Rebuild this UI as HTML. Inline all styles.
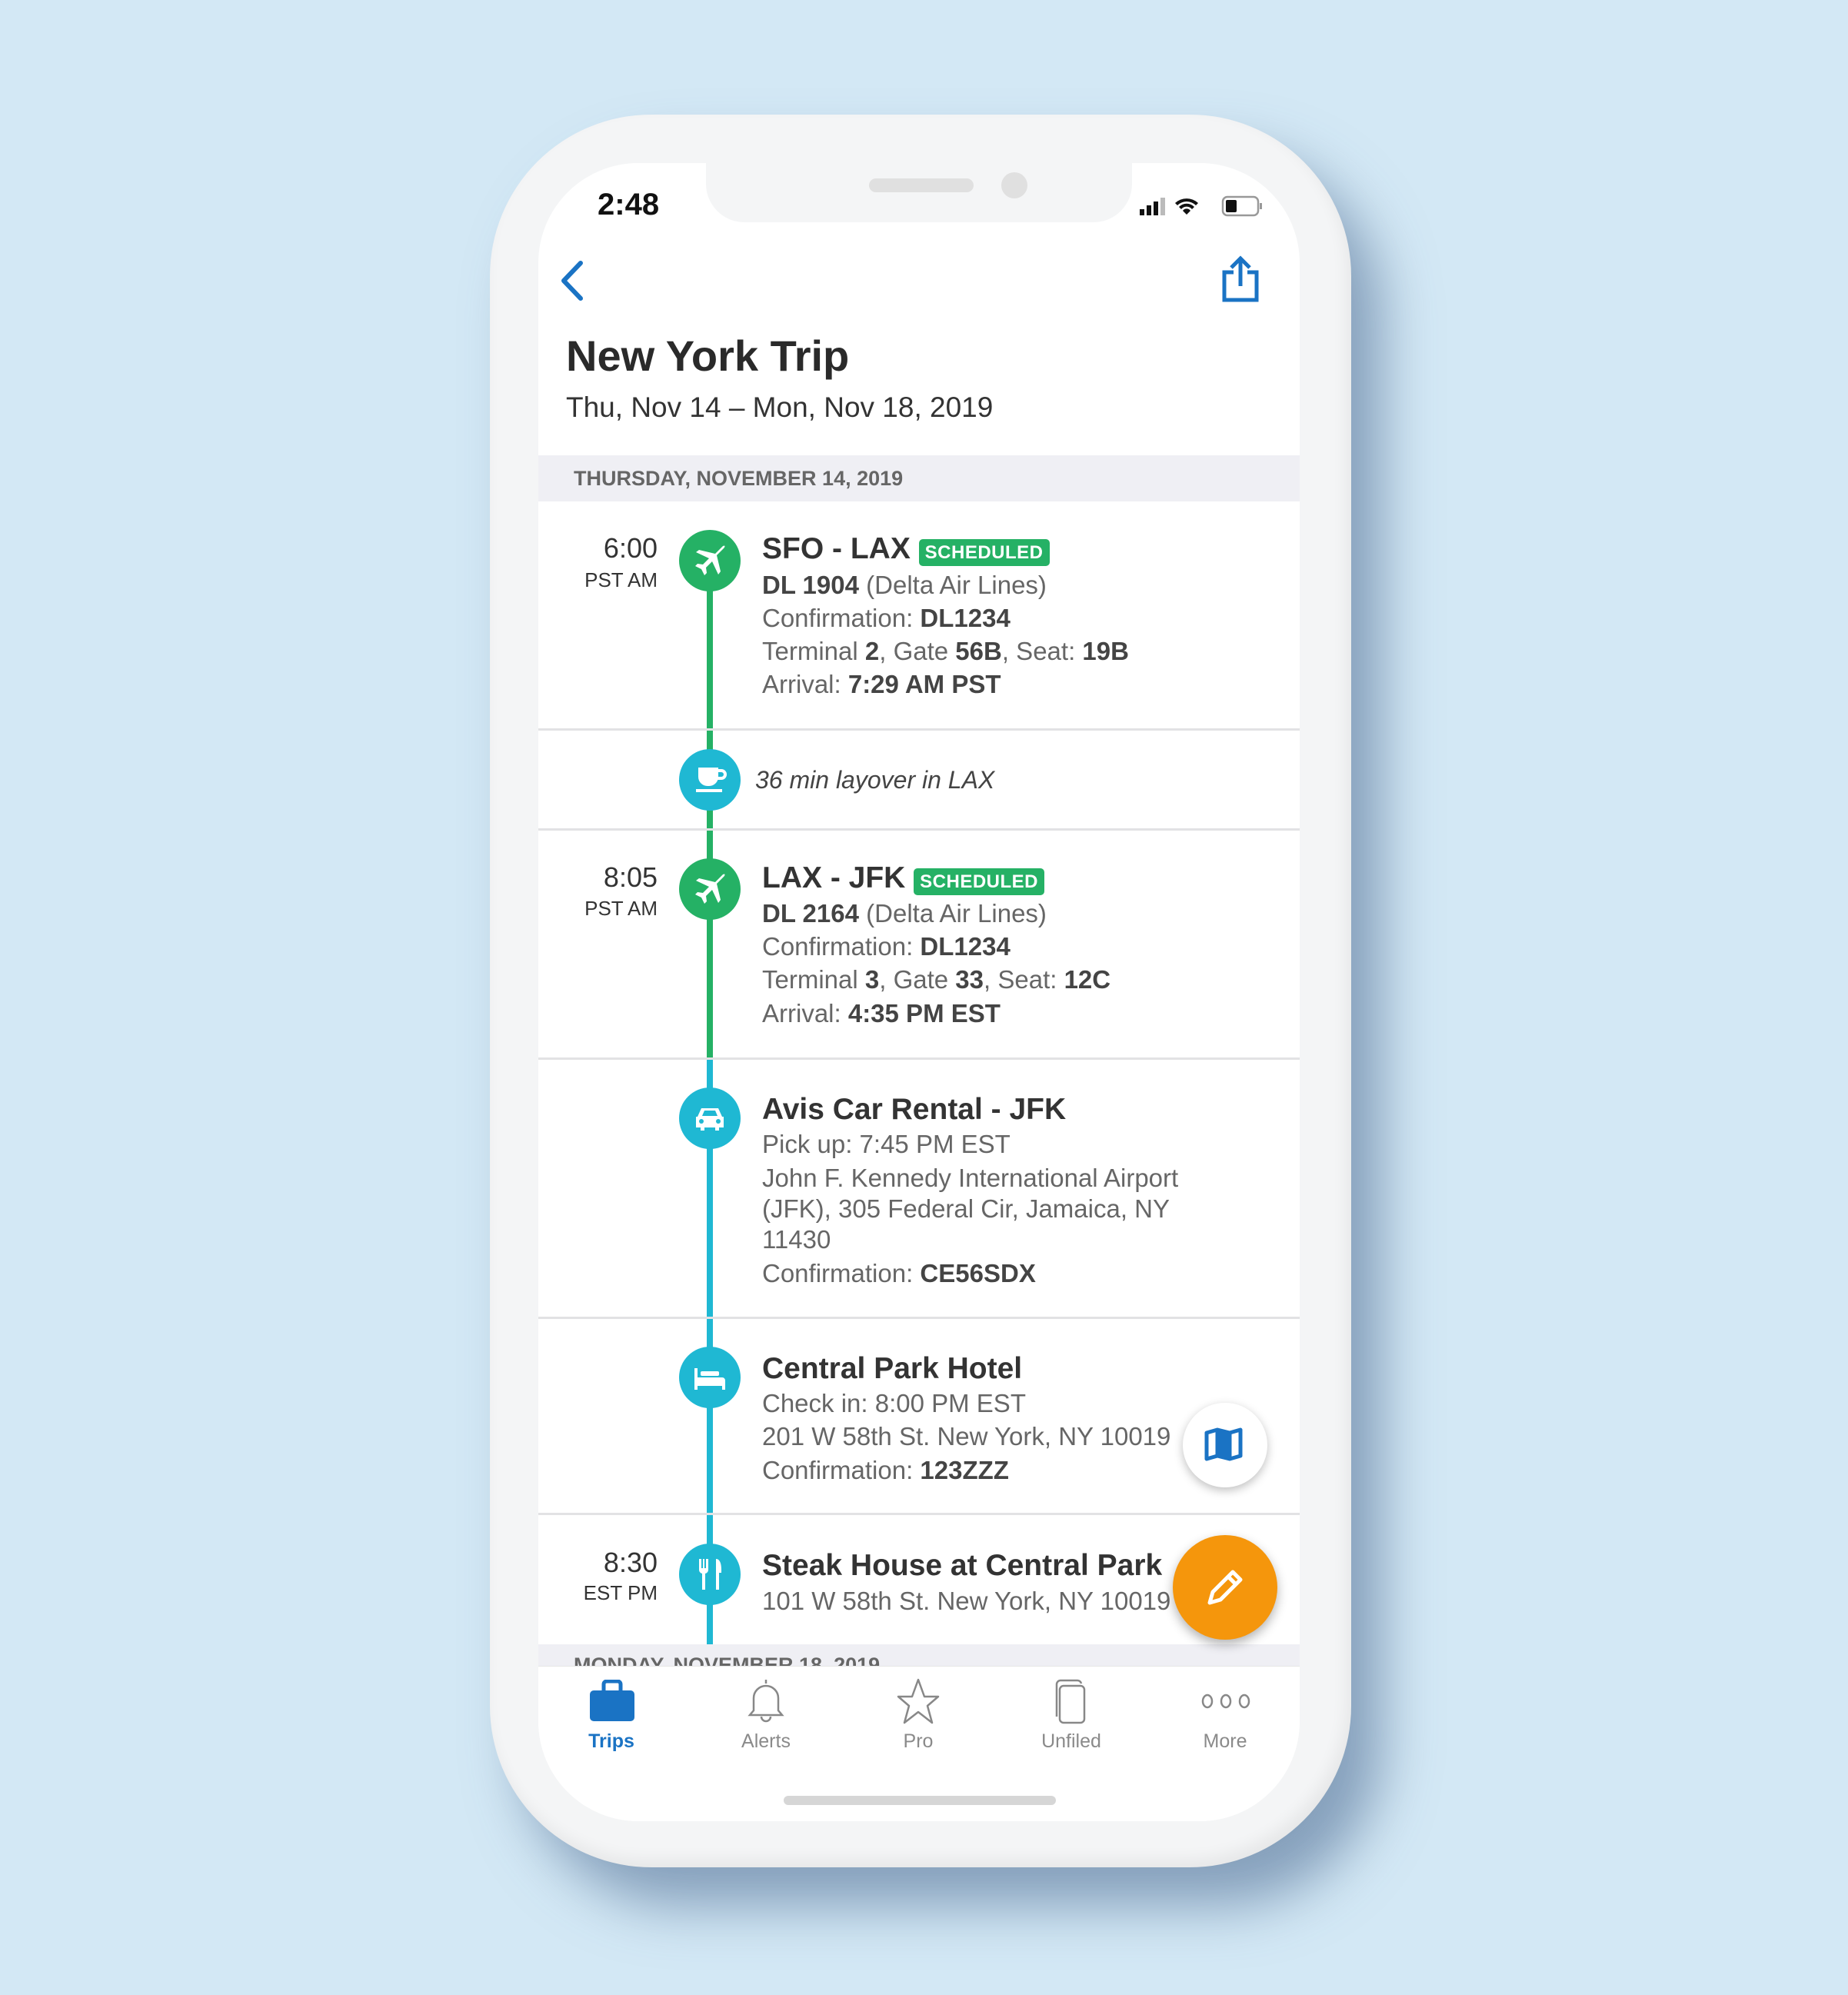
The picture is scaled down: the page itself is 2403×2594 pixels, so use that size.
<!DOCTYPE html>
<html><head><meta charset="utf-8"><style>
*{margin:0;padding:0;box-sizing:border-box}
body{width:2403px;height:2594px;background:#d3e8f5;position:relative;overflow:hidden;font-family:"Liberation Sans",sans-serif;color:#333}
.a{position:absolute}
.phone{left:637px;top:149px;width:1120px;height:2279px;border-radius:210px;background:#f4f5f6;box-shadow:40px 50px 70px rgba(70,100,140,.55), inset -6px -10px 20px rgba(0,0,0,.06)}
.screen{left:700px;top:212px;width:990px;height:2156px;border-radius:130px;background:#fff;overflow:hidden}
.notch{left:918px;top:200px;width:554px;height:89px;background:#f4f5f6;border-radius:0 0 50px 50px}
.hr{left:700px;width:990px;height:3px;background:#e2e2e4}
.t{white-space:nowrap}
.tm{width:160px;text-align:right;left:695px;font-size:36px;color:#333}
.tz{width:160px;text-align:right;left:695px;font-size:26px;color:#333}
.ic{width:80px;height:80px;border-radius:50%;left:883px}
.ti{left:991px;font-size:39px;font-weight:bold;color:#333}
.ln{left:991px;font-size:33px;color:#666}
.ln b{color:#444}
.badge{background:#25b165;color:#fff;font-weight:bold;font-size:24px;border-radius:5px;padding:4px 8px;letter-spacing:.5px}
.tab{width:160px;text-align:center;font-size:25px;color:#8a8a8a;top:2250px}
</style></head><body>
<div class="a phone"></div>
<div class="a screen"></div>
<div class="a notch"></div>
<div class="a" style="left:1130px;top:232px;width:136px;height:18px;border-radius:9px;background:#e0e0e0"></div>
<div class="a" style="left:1302px;top:224px;width:34px;height:34px;border-radius:50%;background:#e0e0e0"></div>
<div class="a t" style="left:777px;top:244px;font-size:40px;font-weight:bold;color:#111">2:48</div>
<!-- status icons -->
<svg class="a" style="left:1480px;top:252px" width="170" height="36" viewBox="0 0 170 36">
<rect x="2" y="20" width="6" height="8" fill="#111"/><rect x="11" y="15" width="6" height="13" fill="#111"/><rect x="20" y="10" width="6" height="18" fill="#111"/><rect x="29" y="5" width="6" height="23" fill="#bbb"/>
<path d="M48 12a22 22 0 0 1 30 0l-3 3a17 17 0 0 0-24 0z M53 17a14 14 0 0 1 20 0l-3 3a9 9 0 0 0-14 0z M58 22a6 6 0 0 1 10 0l-5 5z" fill="#111"/>
<rect x="110" y="4" width="46" height="24" rx="6" fill="none" stroke="#999" stroke-width="2.5"/><rect x="114" y="8" width="14" height="16" rx="2" fill="#111"/><rect x="158" y="12" width="3" height="8" fill="#999"/>
</svg>
<!-- back/share -->
<svg class="a" style="left:725px;top:338px" width="40" height="54" viewBox="0 0 40 54"><path d="M30 4 8 27 30 50" fill="none" stroke="#1a73c4" stroke-width="6" stroke-linecap="round" stroke-linejoin="round"/></svg>
<svg class="a" style="left:1586px;top:332px" width="54" height="62" viewBox="0 0 54 62"><path d="M18 22H6v36h42V22H36" fill="none" stroke="#1a73c4" stroke-width="5"/><path d="M27 40V5M15 16 27 4 39 16" fill="none" stroke="#1a73c4" stroke-width="5"/></svg>
<div class="a t" style="left:736px;top:430px;font-size:56px;font-weight:bold;color:#2a2a2a">New York Trip</div>
<div class="a t" style="left:736px;top:509px;font-size:37px;color:#333">Thu, Nov 14 – Mon, Nov 18, 2019</div>
<div class="a" style="left:700px;top:592px;width:990px;height:60px;background:#efeff4"></div>
<div class="a t" style="left:746px;top:607px;font-size:27px;font-weight:bold;color:#666">THURSDAY, NOVEMBER 14, 2019</div>
<!-- timeline lines -->
<div class="a" style="left:919px;top:729px;width:8px;height:650px;background:#25b165"></div>
<div class="a" style="left:919px;top:1376px;width:8px;height:762px;background:#1fb8d3"></div>
<!-- row1 -->
<div class="a tm t" style="top:692px">6:00</div>
<div class="a tz t" style="top:739px">PST AM</div>
<div class="a ic" style="top:689px;background:#25b165"></div>
<div class="a ti t" style="top:692px">SFO - LAX <span class="badge">SCHEDULED</span></div>
<div class="a ln t" style="top:742px"><b>DL 1904</b> (Delta Air Lines)</div>
<div class="a ln t" style="top:785px">Confirmation: <b>DL1234</b></div>
<div class="a ln t" style="top:828px">Terminal <b>2</b>, Gate <b>56B</b>, Seat: <b>19B</b></div>
<div class="a ln t" style="top:871px">Arrival: <b>7:29 AM PST</b></div>
<div class="a hr" style="top:947px"></div>
<!-- layover -->
<div class="a ic" style="top:974px;background:#1fb8d3"></div>
<div class="a t" style="left:982px;top:996px;font-size:32px;font-style:italic;color:#444">36 min layover in LAX</div>
<div class="a hr" style="top:1077px"></div>
<!-- row2 -->
<div class="a tm t" style="top:1120px">8:05</div>
<div class="a tz t" style="top:1166px">PST AM</div>
<div class="a ic" style="top:1116px;background:#25b165"></div>
<div class="a ti t" style="top:1120px">LAX - JFK <span class="badge">SCHEDULED</span></div>
<div class="a ln t" style="top:1169px"><b>DL 2164</b> (Delta Air Lines)</div>
<div class="a ln t" style="top:1212px">Confirmation: <b>DL1234</b></div>
<div class="a ln t" style="top:1255px">Terminal <b>3</b>, Gate <b>33</b>, Seat: <b>12C</b></div>
<div class="a ln t" style="top:1299px">Arrival: <b>4:35 PM EST</b></div>
<div class="a hr" style="top:1375px"></div>
<!-- row3 -->
<div class="a ic" style="top:1414px;background:#1fb8d3"></div>
<div class="a ti t" style="top:1421px">Avis Car Rental - JFK</div>
<div class="a ln t" style="top:1469px">Pick up: 7:45 PM EST</div>
<div class="a ln" style="top:1512px;line-height:40px;width:620px">John F. Kennedy International Airport<br>(JFK), 305 Federal Cir, Jamaica, NY<br>11430</div>
<div class="a ln t" style="top:1637px">Confirmation: <b>CE56SDX</b></div>
<div class="a hr" style="top:1712px"></div>
<!-- row4 -->
<div class="a ic" style="top:1751px;background:#1fb8d3"></div>
<div class="a ti t" style="top:1758px">Central Park Hotel</div>
<div class="a ln t" style="top:1806px">Check in: 8:00 PM EST</div>
<div class="a ln t" style="top:1849px">201 W 58th St. New York, NY 10019</div>
<div class="a ln t" style="top:1893px">Confirmation: <b>123ZZZ</b></div>
<div class="a hr" style="top:1967px"></div>
<!-- row5 -->
<div class="a tm t" style="top:2011px">8:30</div>
<div class="a tz t" style="top:2056px">EST PM</div>
<div class="a ic" style="top:2007px;background:#1fb8d3"></div>
<div class="a ti t" style="top:2014px">Steak House at Central Park</div>
<div class="a ln t" style="top:2063px">101 W 58th St. New York, NY 10019</div>
<div class="a" style="left:700px;top:2138px;width:990px;height:30px;background:#efeff4;overflow:hidden"><div class="a t" style="left:46px;top:12px;font-size:27px;font-weight:bold;color:#666">MONDAY, NOVEMBER 18, 2019</div></div>
<!-- icons in circles -->
<svg class="a" style="left:883px;top:689px" width="80" height="80" viewBox="0 0 80 80"><path d="M58 24c3-3 1-5-2-2L47 31 26 26l-4 3 17 8-8 8-7-1-3 3 8 4 4 8 3-3-1-7 8-8 8 17 3-4-5-21z" fill="#fff"/></svg>
<svg class="a" style="left:883px;top:1116px" width="80" height="80" viewBox="0 0 80 80"><path d="M58 24c3-3 1-5-2-2L47 31 26 26l-4 3 17 8-8 8-7-1-3 3 8 4 4 8 3-3-1-7 8-8 8 17 3-4-5-21z" fill="#fff"/></svg>
<svg class="a" style="left:883px;top:974px" width="80" height="80" viewBox="0 0 80 80"><path d="M25 24h26v12a12 12 0 0 1-12 12h-2a12 12 0 0 1-12-12z" fill="#fff"/><path d="M51 28h4a5 5 0 0 1 0 10h-5" fill="none" stroke="#fff" stroke-width="4"/><rect x="22" y="52" width="34" height="4" fill="#fff"/></svg>
<svg class="a" style="left:883px;top:1414px" width="80" height="80" viewBox="0 0 80 80"><path d="M24 38l5-11h22l5 11h2v14h-6v4h-5v-4H33v4h-5v-4h-6V38z" fill="#fff"/><path d="M30 37l3-7h14l3 7z" fill="#1fb8d3"/><circle cx="29" cy="44" r="3" fill="#1fb8d3"/><circle cx="51" cy="44" r="3" fill="#1fb8d3"/></svg>
<svg class="a" style="left:883px;top:1751px" width="80" height="80" viewBox="0 0 80 80"><path d="M20 28h4v12h32a4 4 0 0 1 4 4v12h-4v-5H24v5h-4z" fill="#fff"/><rect x="28" y="32" width="24" height="6" rx="2" fill="#fff"/></svg>
<svg class="a" style="left:883px;top:2007px" width="80" height="80" viewBox="0 0 80 80"><path d="M26 20v14a5 5 0 0 0 4 5v21h4V39a5 5 0 0 0 4-5V20h-3v12h-2V20h-2v12h-2V20z" fill="#fff"/><path d="M48 20c5 0 7 6 7 14v4h-3v22h-4z" fill="#fff"/></svg>
<!-- map & fab -->
<div class="a" style="left:1538px;top:1824px;width:110px;height:110px;border-radius:50%;background:#fff;box-shadow:0 4px 12px rgba(0,0,0,.25)"></div>
<svg class="a" style="left:1563px;top:1855px" width="60" height="48" viewBox="0 0 60 48"><path d="M6 8l14-4 16 4 14-4v34l-14 4-16-4-14 4z" fill="none" stroke="#1a73c4" stroke-width="5" stroke-linejoin="round"/><path d="M20 4v34M36 8v34" stroke="#1a73c4" stroke-width="5"/><path d="M20 4v34l16 4V8z" fill="#1a73c4"/></svg>
<div class="a" style="left:1525px;top:1996px;width:136px;height:136px;border-radius:50%;background:#f5960c;box-shadow:0 6px 14px rgba(0,0,0,.3)"></div>
<svg class="a" style="left:1563px;top:2034px" width="60" height="60" viewBox="0 0 60 60"><path d="M10 50l4-14 26-26 10 10-26 26z" fill="none" stroke="#fff" stroke-width="5" stroke-linejoin="round"/><path d="M34 16l10 10" stroke="#fff" stroke-width="5"/></svg>
<!-- tab bar -->
<div class="a" style="left:700px;top:2166px;width:990px;height:202px;background:#fff;border-radius:0 0 130px 130px;border-top:1px solid #e6e6e6"></div>
<svg class="a" style="left:765px;top:2184px" width="62" height="56" viewBox="0 0 62 56"><rect x="2" y="14" width="58" height="40" rx="5" fill="#1a73c4"/><path d="M20 16V6a4 4 0 0 1 4-4h14a4 4 0 0 1 4 4v10" fill="none" stroke="#1a73c4" stroke-width="5"/></svg>
<svg class="a" style="left:968px;top:2180px" width="56" height="64" viewBox="0 0 56 64"><path d="M28 4v5M12 44V28a16 16 0 0 1 32 0v16l5 6H7z" fill="none" stroke="#888" stroke-width="2.5"/><path d="M22 52a6 6 0 0 0 12 0" fill="none" stroke="#888" stroke-width="2.5"/></svg>
<svg class="a" style="left:1164px;top:2180px" width="60" height="64" viewBox="0 0 60 64"><path d="M30 4l8 22h18l-14 12 6 22-18-14-18 14 6-22L4 26h18z" fill="none" stroke="#888" stroke-width="2.5" stroke-linejoin="round"/></svg>
<svg class="a" style="left:1368px;top:2182px" width="50" height="62" viewBox="0 0 50 62"><path d="M6 50V8a5 5 0 0 1 5-5h22a5 5 0 0 1 5 4" fill="none" stroke="#888" stroke-width="2.5"/><rect x="10" y="10" width="32" height="48" rx="5" fill="none" stroke="#888" stroke-width="2.5"/></svg>
<svg class="a" style="left:1561px;top:2199px" width="66" height="26" viewBox="0 0 66 26"><ellipse cx="9" cy="13" rx="6" ry="8" fill="none" stroke="#888" stroke-width="2.5"/><ellipse cx="33" cy="13" rx="6" ry="8" fill="none" stroke="#888" stroke-width="2.5"/><ellipse cx="57" cy="13" rx="6" ry="8" fill="none" stroke="#888" stroke-width="2.5"/></svg>
<div class="a tab" style="left:715px;color:#1a73c4;font-weight:bold">Trips</div>
<div class="a tab" style="left:916px">Alerts</div>
<div class="a tab" style="left:1114px">Pro</div>
<div class="a tab" style="left:1313px">Unfiled</div>
<div class="a tab" style="left:1513px">More</div>
<div class="a" style="left:1019px;top:2335px;width:354px;height:12px;border-radius:6px;background:#d6d6d6"></div>
</body></html>
